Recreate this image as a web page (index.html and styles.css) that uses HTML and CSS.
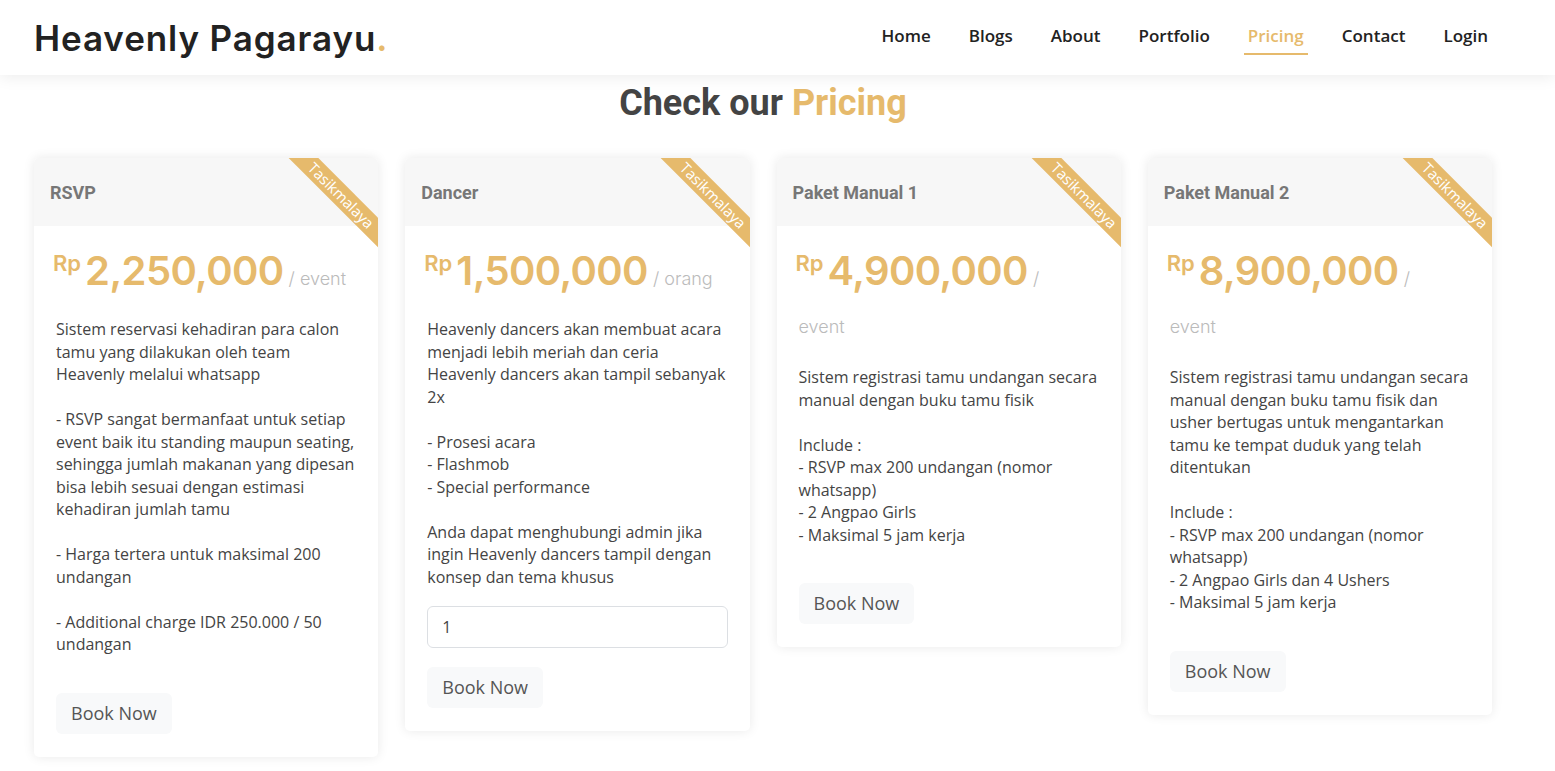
FILE: index.html
```html
<!DOCTYPE html>
<html lang="id">
<head>
<meta charset="utf-8">
<title>Heavenly Pagarayu - Pricing</title>
<link rel="stylesheet" href="styles.css">
</head>
<body>
<header class="site-header">
  <a class="logo" href="#">Heavenly Pagarayu<span class="dot">.</span></a>
  <nav class="nav">
    <a href="#">Home</a>
    <a href="#">Blogs</a>
    <a href="#">About</a>
    <a href="#">Portfolio</a>
    <a href="#" class="active">Pricing</a>
    <a href="#">Contact</a>
    <a href="#">Login</a>
  </nav>
</header>

<main class="pricing">
  <h2 class="section-title">Check our <span class="accent">Pricing</span></h2>

  <div class="grid">
    <div class="card">
      <div class="ribbon">Tasikmalaya</div>
      <div class="card-head"><h3>RSVP</h3></div>
      <div class="card-body">
        <div class="price"><span class="cur">Rp</span>2,250,000<span class="per"> / event</span></div>
        <p class="desc">Sistem reservasi kehadiran para calon tamu yang dilakukan oleh team Heavenly melalui whatsapp

- RSVP sangat bermanfaat untuk setiap event baik itu standing maupun seating, sehingga jumlah makanan yang dipesan bisa lebih sesuai dengan estimasi kehadiran jumlah tamu

- Harga tertera untuk maksimal 200 undangan

- Additional charge IDR 250.000 / 50 undangan</p>
        <button class="btn">Book Now</button>
      </div>
    </div>

    <div class="card">
      <div class="ribbon">Tasikmalaya</div>
      <div class="card-head"><h3>Dancer</h3></div>
      <div class="card-body">
        <div class="price"><span class="cur">Rp</span>1,500,000<span class="per"> / orang</span></div>
        <p class="desc">Heavenly dancers akan membuat acara menjadi lebih meriah dan ceria
Heavenly dancers akan tampil sebanyak 2x

- Prosesi acara
- Flashmob
- Special performance

Anda dapat menghubungi admin jika ingin Heavenly dancers tampil dengan konsep dan tema khusus</p>
        <input class="qty" type="text" value="1">
        <button class="btn">Book Now</button>
      </div>
    </div>

    <div class="card">
      <div class="ribbon">Tasikmalaya</div>
      <div class="card-head"><h3>Paket Manual 1</h3></div>
      <div class="card-body">
        <div class="price"><span class="cur">Rp</span>4,900,000<span class="per"> /<br>event</span></div>
        <p class="desc">Sistem registrasi tamu undangan secara manual dengan buku tamu fisik

Include :
- RSVP max 200 undangan (nomor whatsapp)
- 2 Angpao Girls
- Maksimal 5 jam kerja</p>
        <button class="btn">Book Now</button>
      </div>
    </div>

    <div class="card">
      <div class="ribbon">Tasikmalaya</div>
      <div class="card-head"><h3>Paket Manual 2</h3></div>
      <div class="card-body">
        <div class="price"><span class="cur">Rp</span>8,900,000<span class="per"> /<br>event</span></div>
        <p class="desc">Sistem registrasi tamu undangan secara manual dengan buku tamu fisik dan usher bertugas untuk mengantarkan tamu ke tempat duduk yang telah ditentukan

Include :
- RSVP max 200 undangan (nomor whatsapp)
- 2 Angpao Girls dan 4 Ushers
- Maksimal 5 jam kerja</p>
        <button class="btn">Book Now</button>
      </div>
    </div>
  </div>
</main>
</body>
</html>
```

FILE: styles.css
```css
* { box-sizing: border-box; }

body {
  margin: 0;
  background: #fff;
  font-family: "Open Sans", "Liberation Sans", sans-serif;
  color: #444;
}

.site-header {
  height: 75px;
  display: flex;
  align-items: center;
  justify-content: space-between;
  padding: 0 63px 0 34px;
  background: #fff;
  box-shadow: 0 2px 15px rgba(0, 0, 0, 0.08);
  position: relative;
  z-index: 2;
}

.logo {
  font-family: "Inter", "Liberation Sans", sans-serif;
  font-weight: 600;
  font-size: 35px;
  letter-spacing: 0.9px;
  color: #222;
  text-decoration: none;
}

.logo .dot { color: #e6ba6c; }

.nav {
  display: flex;
  gap: 30px;
}

.nav a {
  display: block;
  padding: 5px 4px 6px;
  line-height: 22px;
  font-size: 17px;
  font-weight: 600;
  color: #222;
  text-decoration: none;
  border-bottom: 2px solid transparent;
}

.nav a.active {
  color: #e6ba6c;
  border-bottom-color: #e6ba6c;
}

.pricing {
  padding: 0 63px 40px 34px;
}

.section-title {
  margin: 7px 0 33px;
  text-align: center;
  font-family: Roboto, "Liberation Sans", sans-serif;
  font-weight: 700;
  font-size: 36px;
  line-height: 43px;
  color: #444;
}

.accent { color: #e6ba6c; }

.grid {
  display: grid;
  grid-template-columns: repeat(4, 1fr);
  gap: 27px;
  align-items: start;
}

.card {
  position: relative;
  overflow: hidden;
  background: #fff;
  border-radius: 5px;
  box-shadow: 0 0 12px rgba(0, 0, 0, 0.09);
}

.ribbon {
  position: absolute;
  top: 27px;
  right: -48px;
  width: 170px;
  height: 21px;
  line-height: 21px;
  text-align: center;
  background: #e6ba6c;
  color: #fff;
  font-size: 15px;
  transform: rotate(45deg);
}

.card-head {
  height: 68px;
  display: flex;
  align-items: center;
  padding: 0 16px;
  background: #f7f7f7;
}

.card-head h3 {
  margin: 0;
  font-family: Roboto, "Liberation Sans", sans-serif;
  font-weight: 700;
  font-size: 18px;
  color: #777;
}

.card-body {
  padding: 21px 22px 23px;
}

.price {
  font-family: "Inter", "Liberation Sans", sans-serif;
  font-weight: 600;
  font-size: 40px;
  line-height: 48px;
  color: #e6ba6c;
  letter-spacing: -0.6px;
}

.price .cur {
  font-size: 22px;
  line-height: 1;
  vertical-align: 14px;
  margin-left: -3px;
  margin-right: 4px;
  letter-spacing: 0;
}

.price .per {
  font-size: 18px;
  line-height: 1;
  font-weight: 300;
  color: #bbb;
  letter-spacing: 0;
}

.desc {
  margin: 23px 0 18px;
  white-space: pre-line;
  font-size: 16px;
  line-height: 22.5px;
  color: #444;
}

.qty {
  display: block;
  width: 100%;
  height: 42px;
  padding: 0 14px;
  border: 1px solid #dcdfe3;
  border-radius: 6px;
  font-family: "Open Sans", "Liberation Sans", sans-serif;
  font-size: 16px;
  color: #444;
  background: #fff;
}

.btn {
  display: block;
  margin-top: 19px;
  padding: 8px 15px;
  line-height: 25px;
  font-family: "Open Sans", "Liberation Sans", sans-serif;
  font-size: 18px;
  color: #555;
  background: #f8f9fa;
  border: none;
  border-radius: 6px;
}

.desc + .btn {
  margin-top: 37px;
}
```
